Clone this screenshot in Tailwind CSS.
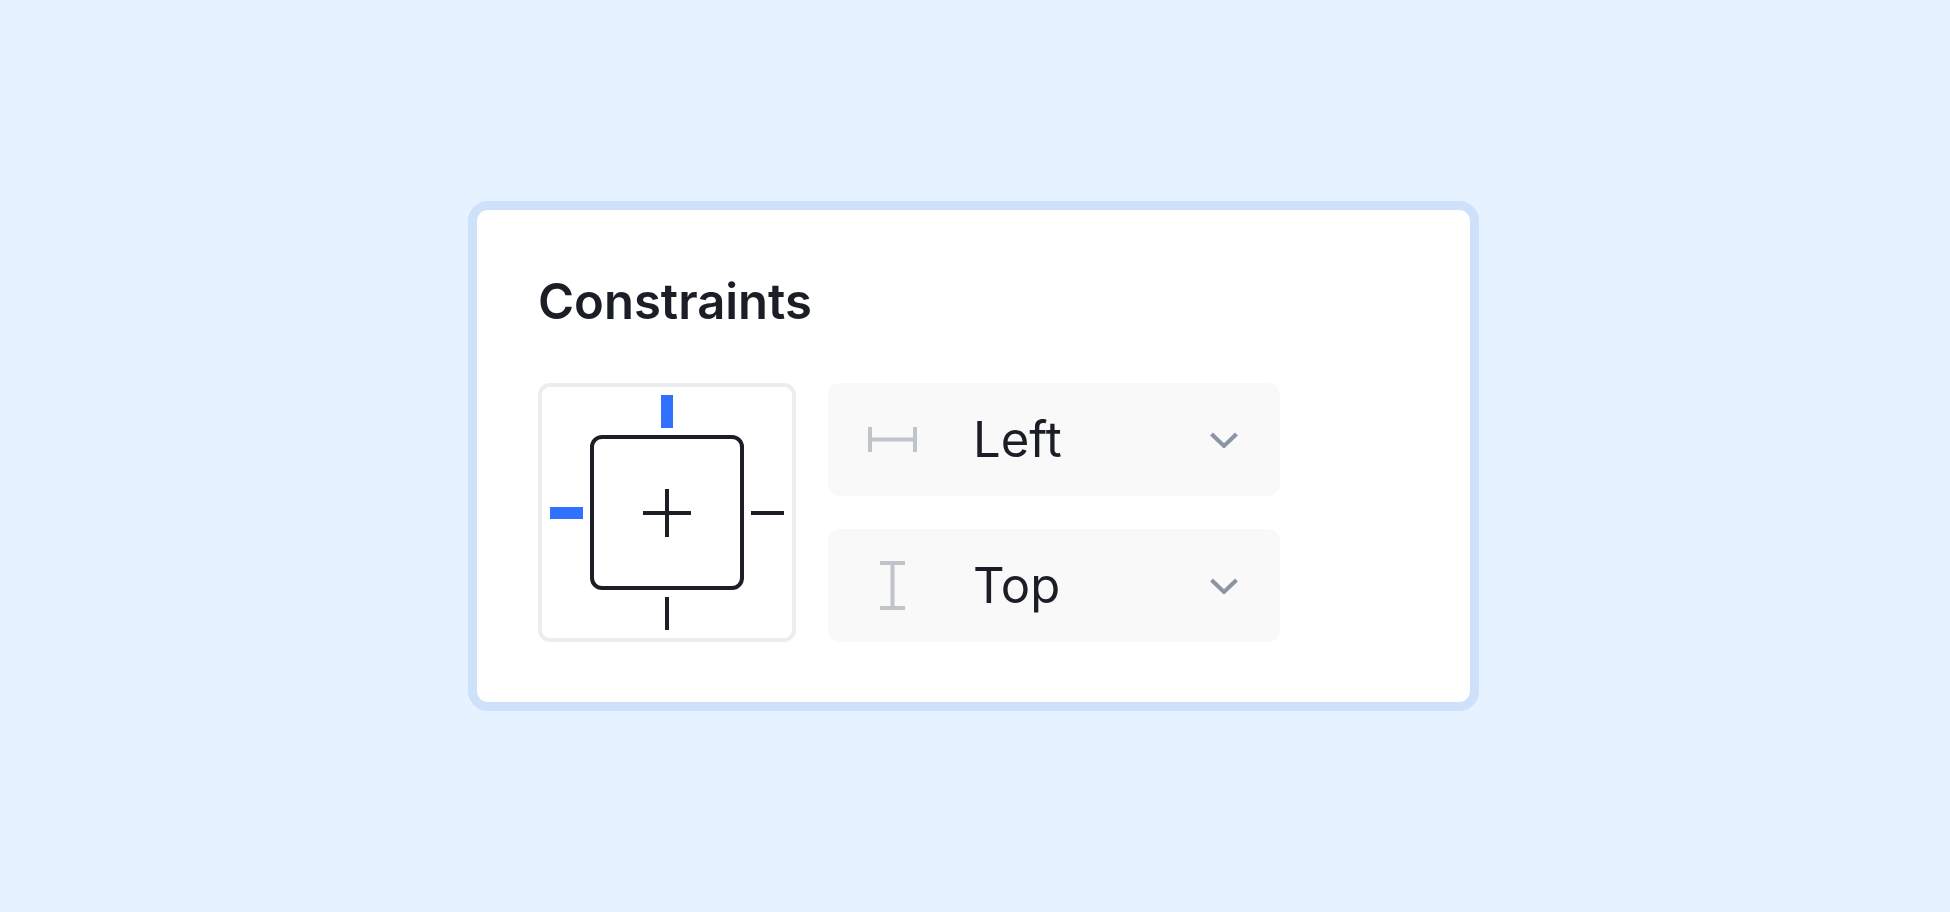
<!DOCTYPE html>
<html lang="en">

<head>
    <meta charset="UTF-8">
    <meta name="viewport" content="width=device-width, initial-scale=1.0">
    <title>Constraints</title>
    <script src="https://cdn.jsdelivr.net/npm/@tailwindcss/browser@4"></script>
</head>

<body class="min-h-screen flex items-center justify-center pr-[3px] bg-[#e6f2ff] font-['Inter',sans-serif] text-[#1b1e27]">

    <section class="w-full max-w-[1011px] bg-white border-[9px] border-[#cde1fb] rounded-[20px] px-[61px] py-[60px]">
        <h1 class="text-[49px] leading-[64px] font-semibold mb-[49px]">Constraints</h1>

        <div class="flex gap-8">
            <!-- Anchor picker -->
            <div class="w-[258px] shrink-0 grid grid-cols-[48px_1fr_48px] grid-rows-[48px_1fr_48px] border-4 border-[#ededed] rounded-xl">
                <button type="button" aria-label="Top" aria-pressed="true" class="col-start-2 flex justify-center pt-2">
                    <span class="w-3 h-[33px] bg-[#3072ff]"></span>
                </button>
                <button type="button" aria-label="Left" aria-pressed="true" class="col-start-1 row-start-2 flex items-center pl-2">
                    <span class="w-[33px] h-3 bg-[#3072ff]"></span>
                </button>
                <button type="button" aria-label="Center" class="col-start-2 row-start-2 flex items-center justify-center border-4 border-[#1b1e27] rounded-xl">
                    <svg class="size-12" viewBox="0 0 48 48" fill="none" stroke="currentColor" stroke-width="4">
                        <path d="M24 0v48M0 24h48" />
                    </svg>
                </button>
                <button type="button" aria-label="Right" aria-pressed="false" class="col-start-3 row-start-2 flex items-center justify-end pr-2">
                    <span class="w-[33px] h-1 bg-[#1b1e27]"></span>
                </button>
                <button type="button" aria-label="Bottom" aria-pressed="false" class="col-start-2 row-start-3 flex items-end justify-center pb-2">
                    <span class="w-1 h-[33px] bg-[#1b1e27]"></span>
                </button>
            </div>

            <div class="w-[452px] flex flex-col gap-[33px]">
                <div class="relative">
                    <label for="horizontal" class="absolute left-10 inset-y-0 flex items-center pointer-events-none">
                        <svg role="img" aria-label="Horizontal constraint" class="size-[49px] text-[#bfc4cb]" viewBox="0 0 49 49" fill="none" stroke="currentColor" stroke-width="4">
                            <path d="M2 12v25M47 12v25M2 24.500h45" />
                        </svg>
                    </label>
                    <select id="horizontal" name="horizontal" class="appearance-none w-full h-[113px] pl-[145px] pr-20 text-[49px] leading-[60px] bg-[#f9f9f9] rounded-xl">
                        <option>Left</option>
                        <option>Right</option>
                        <option>Center</option>
                        <option>Scale</option>
                    </select>
                    <div class="absolute right-10 inset-y-0 flex items-center pointer-events-none">
                        <svg class="w-8 h-4 text-[#8b95a4]" viewBox="0 0 32 16" fill="none" stroke="currentColor" stroke-width="4">
                            <path d="M3.500 2l12.500 12 12.500-12" />
                        </svg>
                    </div>
                </div>

                <div class="relative">
                    <label for="vertical" class="absolute left-10 inset-y-0 flex items-center pointer-events-none">
                        <svg role="img" aria-label="Vertical constraint" class="size-[49px] text-[#bfc4cb]" viewBox="0 0 49 49" fill="none" stroke="currentColor" stroke-width="4">
                            <path d="M12 2h25M12 47h25M24.500 2v45" />
                        </svg>
                    </label>
                    <select id="vertical" name="vertical" class="appearance-none w-full h-[113px] pl-[145px] pr-20 text-[49px] leading-[60px] bg-[#f9f9f9] rounded-xl">
                        <option>Top</option>
                        <option>Bottom</option>
                        <option>Center</option>
                        <option>Scale</option>
                    </select>
                    <div class="absolute right-10 inset-y-0 flex items-center pointer-events-none">
                        <svg class="w-8 h-4 text-[#8b95a4]" viewBox="0 0 32 16" fill="none" stroke="currentColor" stroke-width="4">
                            <path d="M3.500 2l12.500 12 12.500-12" />
                        </svg>
                    </div>
                </div>
            </div>
        </div>
    </section>

</body>

</html>
